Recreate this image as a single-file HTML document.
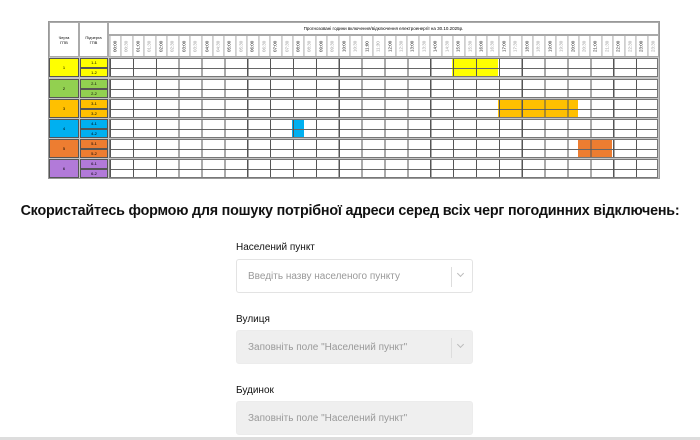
<!DOCTYPE html>
<html><head><meta charset="utf-8"><style>
*{margin:0;padding:0;box-sizing:border-box}
body{width:700px;height:440px;background:#fff;position:relative;overflow:hidden;font-family:"Liberation Sans",sans-serif}
.a{position:absolute}
.tbl{left:48px;top:21px;width:612px;height:158px;border:1px solid #999;background:#c4c4c4}
.hc{background:#fff;border:1px solid #aaa;font-size:4px;text-align:center;display:flex;align-items:center;justify-content:center;line-height:5px}
.hrs{display:flex}
.hrs span{width:11.44px;height:21px;border-right:1px solid #aaa;font-size:4.5px;writing-mode:vertical-rl;transform:rotate(180deg);display:flex;align-items:center;justify-content:center;color:#222}
.hrs span.o{color:#999}
.g{left:60px;width:549px;height:19px;background:#fff}
.ov{left:0;top:0;width:549px;height:19px;background:repeating-linear-gradient(to right,#555 0 1px,transparent 1px 22.875px),linear-gradient(to bottom,transparent 9px,#666 9px 10px,transparent 10px);border:1px solid #777}
.gc{left:0;width:30px;height:19px;border:1px solid #555;font-size:4px;display:flex;align-items:center;justify-content:center}
.sc{left:31px;width:28px;height:9.5px;border:1px solid #555;font-size:4px;display:flex;align-items:center;justify-content:center}
h2{position:absolute;left:0;width:700px;top:203px;text-align:center;font-size:14.3px;font-weight:bold;color:#111;letter-spacing:-0.2px}
.lb{left:236px;font-size:10px;color:#111}
.in{left:236px;width:237px;height:34px;border:1px solid #e3e3e3;border-radius:3px;font-size:10px;color:#999;padding-left:11px;display:flex;align-items:center}
.dis{background:#efefef;border-color:#ececec}
.sep{position:absolute;left:214px;top:7px;width:1px;height:20px;background:#ddd}
.chev{position:absolute;left:221px;top:11px;width:5px;height:5px;border-right:1px solid #bbb;border-bottom:1px solid #bbb;transform:rotate(45deg)}
</style></head><body>
<div class="a tbl">
 <div class="a hc" style="left:0;top:0;width:30px;height:35px">Черга<br>ГПВ</div>
 <div class="a hc" style="left:30px;top:0;width:29px;height:35px">Підчерга<br>ГПВ</div>
 <div class="a hc" style="left:59px;top:0;width:551px;height:13px;font-size:4.5px">Прогнозовані години включення/відключення електроенергії на 30.10.2025р.</div>
 <div class="a hrs" style="left:59px;top:13px;width:551px;height:22px;background:#fff;border:1px solid #aaa">
<span>00:00</span><span class="o">00:30</span><span>01:00</span><span class="o">01:30</span><span>02:00</span><span class="o">02:30</span><span>03:00</span><span class="o">03:30</span><span>04:00</span><span class="o">04:30</span><span>05:00</span><span class="o">05:30</span><span>06:00</span><span class="o">06:30</span><span>07:00</span><span class="o">07:30</span><span>08:00</span><span class="o">08:30</span><span>09:00</span><span class="o">09:30</span><span>10:00</span><span class="o">10:30</span><span>11:00</span><span class="o">11:30</span><span>12:00</span><span class="o">12:30</span><span>13:00</span><span class="o">13:30</span><span>14:00</span><span class="o">14:30</span><span>15:00</span><span class="o">15:30</span><span>16:00</span><span class="o">16:30</span><span>17:00</span><span class="o">17:30</span><span>18:00</span><span class="o">18:30</span><span>19:00</span><span class="o">19:30</span><span>20:00</span><span class="o">20:30</span><span>21:00</span><span class="o">21:30</span><span>22:00</span><span class="o">22:30</span><span>23:00</span><span class="o">23:30</span>
 </div>

 <div class="a gc" style="top:36px;background:#ffff00">1</div>
 <div class="a sc" style="top:36px;background:#ffff00">1-1</div><div class="a sc" style="top:45.5px;background:#ffff00">1-2</div>
 <div class="a g" style="top:36px"><div class="a" style="left:343px;top:0;width:46px;height:19px;background:#ffff00"></div><div class="a ov"></div></div>
 <div class="a gc" style="top:57px;background:#92d050">2</div>
 <div class="a sc" style="top:57px;background:#92d050">2-1</div><div class="a sc" style="top:66.5px;background:#92d050">2-2</div>
 <div class="a g" style="top:57px"><div class="a ov"></div></div>
 <div class="a gc" style="top:77px;background:#ffc000">3</div>
 <div class="a sc" style="top:77px;background:#ffc000">3-1</div><div class="a sc" style="top:86.5px;background:#ffc000">3-2</div>
 <div class="a g" style="top:77px"><div class="a" style="left:389px;top:0;width:80px;height:19px;background:#ffc000"></div><div class="a ov"></div></div>
 <div class="a gc" style="top:97px;background:#00b0f0">4</div>
 <div class="a sc" style="top:97px;background:#00b0f0">4-1</div><div class="a sc" style="top:106.5px;background:#00b0f0">4-2</div>
 <div class="a g" style="top:97px"><div class="a" style="left:183px;top:0;width:11.5px;height:19px;background:#00b0f0"></div><div class="a ov"></div></div>
 <div class="a gc" style="top:117px;background:#ed7d31">5</div>
 <div class="a sc" style="top:117px;background:#ed7d31">5-1</div><div class="a sc" style="top:126.5px;background:#ed7d31">5-2</div>
 <div class="a g" style="top:117px"><div class="a" style="left:469px;top:0;width:34px;height:19px;background:#ed7d31"></div><div class="a ov"></div></div>
 <div class="a gc" style="top:137px;background:#b27ad9">6</div>
 <div class="a sc" style="top:137px;background:#b27ad9">6-1</div><div class="a sc" style="top:146.5px;background:#b27ad9">6-2</div>
 <div class="a g" style="top:137px"><div class="a ov"></div></div>
</div>

<h2>Скористайтесь формою для пошуку потрібної адреси серед всіх черг погодинних відключень:</h2>

<div class="a lb" style="top:242px">Населений пункт</div>
<div class="a in" style="top:259px">Введіть назву населеного пункту<div class="sep"></div><div class="chev"></div></div>
<div class="a lb" style="top:314px">Вулиця</div>
<div class="a in dis" style="top:330px">Заповніть поле "Населений пункт"<div class="sep"></div><div class="chev"></div></div>
<div class="a lb" style="top:385px">Будинок</div>
<div class="a in dis" style="top:401px">Заповніть поле "Населений пункт"</div>
<div class="a" style="left:0;top:437px;width:700px;height:3px;background:#ddd"></div>
</body></html>
